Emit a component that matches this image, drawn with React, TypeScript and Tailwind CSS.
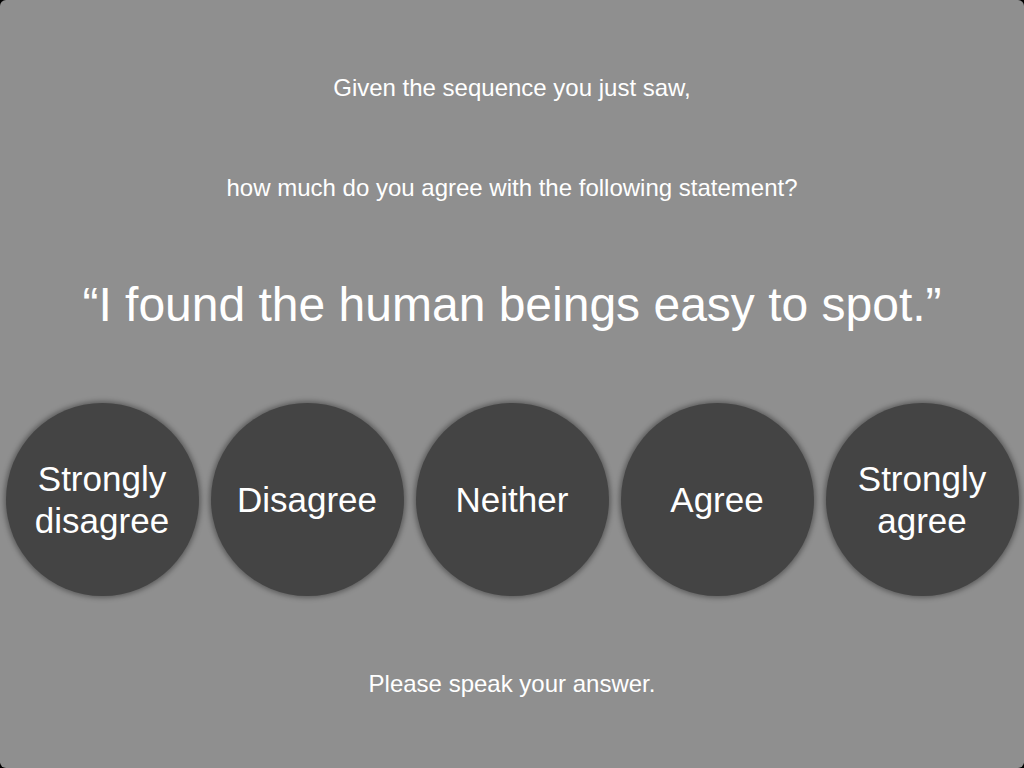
export default function App() {
  const answers = [
    ["Strongly", "disagree"],
    ["Disagree"],
    ["Neither"],
    ["Agree"],
    ["Strongly", "agree"],
  ];

  return (
    <div className="w-[1024px] h-[768px] bg-black">
      <div
        className="w-full h-full rounded-[6px] bg-[#8f8f8f] flex flex-col items-center text-white"
        style={{ fontFamily: '"Liberation Sans", Arial, sans-serif' }}
      >
        {/* Prompt */}
        <p className="mt-[74px] text-[24px] leading-[28px]">Given the sequence you just saw,</p>
        <p className="mt-[72px] text-[24px] leading-[28px]">how much do you agree with the following statement?</p>

        {/* Statement */}
        <h1 className="mt-[75px] text-[48px] leading-[56px]">
          “I found the human beings easy to spot.”
        </h1>

        {/* Answer circles */}
        <div className="mt-[70px] flex gap-[12px]">
          {answers.map((lines) => (
            <div
              key={lines.join(" ")}
              className="w-[193px] h-[193px] rounded-full bg-[#444444] shadow-[0_0_5px_2px_rgba(0,0,0,0.35)] flex flex-col items-center justify-center text-[35px] leading-[42px]"
            >
              {lines.map((l) => (
                <span key={l}>{l}</span>
              ))}
            </div>
          ))}
        </div>

        <p className="mt-[74px] text-[24px] leading-[28px]">Please speak your answer.</p>
      </div>
    </div>
  );
}
